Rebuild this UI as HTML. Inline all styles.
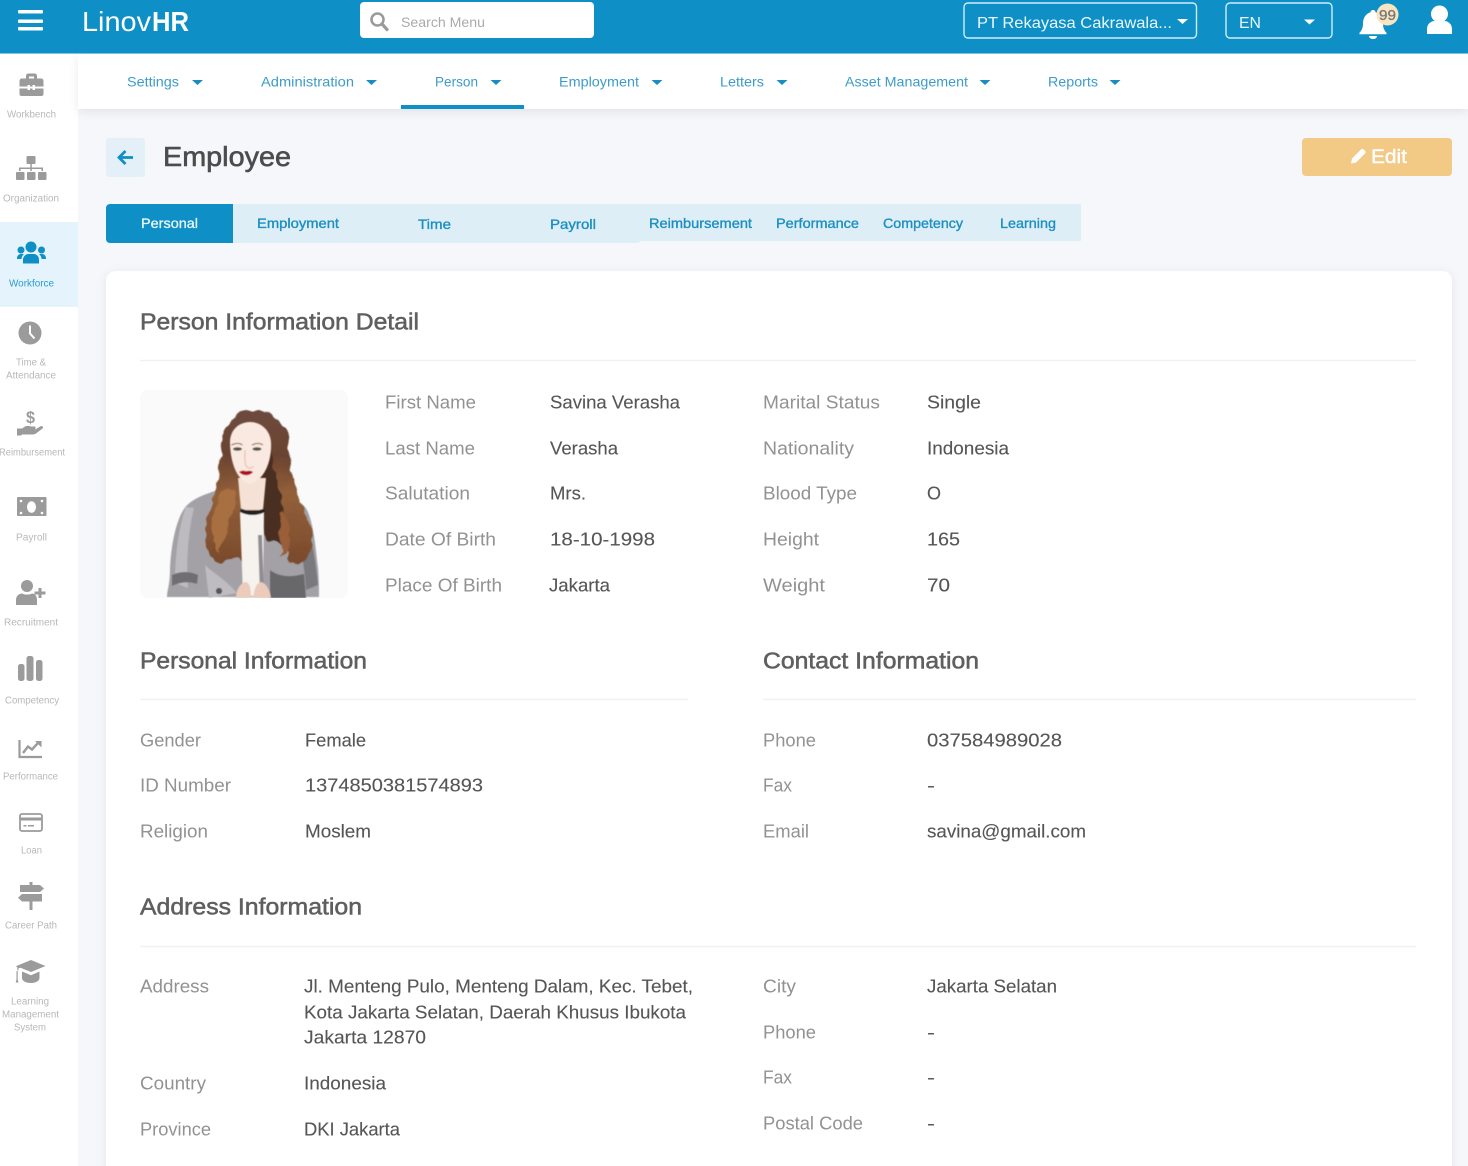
<!DOCTYPE html>
<html lang="en"><head><meta charset="utf-8"><title>Employee - LinovHR</title>
<style>
html,body{margin:0;padding:0;width:1468px;height:1166px;overflow:hidden;background:#f5f7fb}
svg{display:block}
text{font-family:"Liberation Sans",sans-serif}
.l{font-size:18.5px;fill:#929292}
.v{font-size:18.5px;fill:#565656;stroke:#565656;stroke-width:.12px}
.h{font-size:23.5px;fill:#5f5f5f;stroke:#5f5f5f;stroke-width:.55px}
.s{font-size:10px;fill:#b8b8b8}
.n{font-size:14px;fill:#3d9cc8}
.t{font-size:14px;fill:#1c8fc2;stroke:#1c8fc2;stroke-width:.35px}
.i{fill:#9b9b9b}
</style></head><body>
<svg width="1468" height="1166" viewBox="0 0 1468 1166" xmlns="http://www.w3.org/2000/svg">
<defs>
<filter id="sh" x="-5%" y="-5%" width="110%" height="110%"><feDropShadow dx="0" dy="2" stdDeviation="5" flood-color="#000" flood-opacity=".07"/></filter>
<filter id="shn" x="-2%" y="-40%" width="104%" height="200%"><feDropShadow dx="0" dy="3" stdDeviation="5" flood-color="#000" flood-opacity=".08"/></filter>
<filter id="b"><feGaussianBlur stdDeviation=".6"/></filter>
<filter id="curl" x="-10%" y="-10%" width="120%" height="120%"><feTurbulence type="fractalNoise" baseFrequency=".07" numOctaves="2" seed="4" result="n"/><feDisplacementMap in="SourceGraphic" in2="n" scale="11" xChannelSelector="R" yChannelSelector="G"/><feGaussianBlur stdDeviation=".5"/></filter>
<linearGradient id="hg" x1="0" y1="0" x2="0" y2="1"><stop offset="0" stop-color="#6d4a3e"/><stop offset=".3" stop-color="#6b4330"/><stop offset=".55" stop-color="#93603a"/><stop offset="1" stop-color="#7a4a2c"/></linearGradient>
<clipPath id="pc"><rect x="140" y="390" width="208" height="208" rx="8"/></clipPath>
</defs>

<!-- page -->
<rect width="1468" height="1166" fill="#f5f7fb"/>
<!-- sidebar -->
<rect x="0" y="54" width="78" height="1112" fill="#fff"/>
<rect x="0" y="222" width="78" height="85" fill="#e5f4fc"/>
<!-- nav bar -->
<rect x="78" y="54" width="1390" height="55" fill="#fff" filter="url(#shn)"/>
<rect x="401" y="105" width="123" height="4" fill="#0e8fc6"/>
<g class="n" transform="translate(0,-.5)">
<text x="127" y="87" textLength="52" lengthAdjust="spacingAndGlyphs">Settings</text>
<text x="261" y="87" textLength="93" lengthAdjust="spacingAndGlyphs">Administration</text>
<text x="435" y="87" textLength="43" lengthAdjust="spacingAndGlyphs">Person</text>
<text x="559" y="87" textLength="80" lengthAdjust="spacingAndGlyphs">Employment</text>
<text x="720" y="87" textLength="44" lengthAdjust="spacingAndGlyphs">Letters</text>
<text x="845" y="87" textLength="123" lengthAdjust="spacingAndGlyphs">Asset Management</text>
<text x="1048" y="87" textLength="50" lengthAdjust="spacingAndGlyphs">Reports</text>
</g>
<g fill="#1a8cc0">
<path d="M192 80h11l-5.500 5z"/><path d="M366 80h11l-5.500 5z"/><path d="M490.500 80h11l-5.500 5z"/><path d="M651.500 80h11l-5.500 5z"/><path d="M776.500 80h11l-5.500 5z"/><path d="M979.500 80h11l-5.500 5z"/><path d="M1109.500 80h11l-5.500 5z"/>
</g>

<!-- header -->
<rect width="1468" height="53.500" fill="#0e8fc6"/>
<g fill="#fff">
<rect x="18" y="10" width="25" height="3.500" rx="1"/><rect x="18" y="19.500" width="25" height="3.500" rx="1"/><rect x="18" y="27" width="25" height="3.500" rx="1"/>
</g>
<text x="82" y="31" font-size="28" fill="#fff" textLength="69" lengthAdjust="spacingAndGlyphs">Linov</text>
<text x="152" y="31" font-size="28" fill="#fff" font-weight="bold" textLength="37" lengthAdjust="spacingAndGlyphs">HR</text>
<rect x="360" y="2" width="234" height="36" rx="4" fill="#fff"/>
<circle cx="377.500" cy="19.500" r="6" fill="none" stroke="#9a9a9a" stroke-width="2.600"/>
<path d="M382 24l5 5.500" stroke="#9a9a9a" stroke-width="3.200" stroke-linecap="round"/>
<text x="401" y="27" font-size="14" fill="#aaa" textLength="84" lengthAdjust="spacingAndGlyphs">Search Menu</text>
<rect x="964" y="3" width="232.500" height="35" rx="4" fill="none" stroke="#cfeefa" stroke-width="1.400"/>
<text x="977" y="28" font-size="16" fill="#eaf7fc" textLength="195" lengthAdjust="spacingAndGlyphs">PT Rekayasa Cakrawala...</text>
<path d="M1177 19h11l-5.500 5z" fill="#fff"/>
<rect x="1226" y="3" width="106" height="35" rx="4" fill="none" stroke="#cfeefa" stroke-width="1.400"/>
<text x="1239" y="28" font-size="16" fill="#eaf7fc" textLength="22" lengthAdjust="spacingAndGlyphs">EN</text>
<path d="M1304 19.500h11l-5.500 5z" fill="#fff"/>
<path d="M1373 10c1.500 0 2.500 1 2.500 2.300 5 1.500 7.500 6 7.500 11 0 5 1.500 7.500 3.500 9.500v1.500h-27v-1.500c2-2 3.500-4.500 3.500-9.500 0-5 2.500-9.500 7.500-11 0-1.300 1-2.300 2.500-2.300z" fill="#fff"/>
<path d="M1369 36h8c0 2-2 3-4 3s-4-1-4-3z" fill="#fff"/>
<circle cx="1387.500" cy="14.500" r="11" fill="#f7e4c0"/>
<text x="1379" y="20" font-size="15" fill="#777" textLength="17" lengthAdjust="spacingAndGlyphs" stroke="#777" stroke-width=".3">99</text>
<circle cx="1439.500" cy="14" r="8.500" fill="#fff"/>
<path d="M1427 34v-5c0-5 4-8 7.500-8 3 1.500 7 1.500 10 0 3.500 0 7.500 3 7.500 8v5z" fill="#fff"/>

<!-- sidebar icons -->
<g class="i">
<path d="M26 79v-3c0-1.500 1-2.500 2.500-2.500h6c1.500 0 2.500 1 2.500 2.500v3h-3v-2.500h-5V79z"/>
<path d="M22 78.500h19c1.500 0 2.500 1 2.500 2.500v5.500H35v-1.500h-2.500v1.500H30v-1.500h-2.500v1.500H19.500V81c0-1.500 1-2.500 2.500-2.500z"/>
<path d="M19.500 88.500h8V90H30v-1.500h2.500V90H35v-1.500h8.500V94c0 1.200-1 2-2 2H21.500c-1 0-2-.8-2-2z"/>
<rect x="26.500" y="156" width="9" height="8" rx="1"/>
<rect x="16" y="172" width="8.500" height="8" rx="1"/><rect x="27" y="172" width="8.500" height="8" rx="1"/><rect x="38" y="172" width="8.500" height="8" rx="1"/>
<path d="M30.300 164h1.500v3.500H43v3.500h-1.600v-2H31.800v2h-1.500v-2H20.600v2H19V167.500h11.300z"/>
<circle cx="30" cy="333" r="11.500"/>
<path d="M30 325.500v8l4.500 5" fill="none" stroke="#fff" stroke-width="2"/>
<path d="M17 428.500h5l3-2c2-.9 4-.9 6 0h3.500c1.500 0 1.500 2.500 0 2.800h-5.500 6.500l5-3c2-.9 3.500 1 2 2.200l-6.500 5c-1 .6-2 1-3 1H22l-1 1h-4z"/>
<text x="26" y="423" font-size="17" font-weight="bold" fill="#9b9b9b" textLength="9" lengthAdjust="spacingAndGlyphs">$</text>
<rect x="17" y="497" width="29.500" height="19" rx="1"/>
<ellipse cx="31.500" cy="507" rx="4.500" ry="5.800" fill="#fff"/>
<g fill="#fff"><circle cx="21" cy="501" r="1.300"/><circle cx="42" cy="501" r="1.300"/><circle cx="21" cy="513" r="1.300"/><circle cx="42" cy="513" r="1.300"/></g>
<circle cx="27" cy="586" r="6"/>
<path d="M16 605v-5c0-4 3-6.500 6-6.500 3 1.500 7 1.500 10 0 3 0 5 2.500 5 6.500v5z"/>
<path d="M38.500 588h3v3.500h4v3h-4v3.500h-3v-3.500h-4v-3h4z"/>
<rect x="18" y="664" width="6.500" height="17" rx="2.500"/><rect x="26.500" y="656" width="7" height="25" rx="2.500"/><rect x="36" y="660" width="6.500" height="21" rx="2.500"/>
<path d="M19.500 740v17H42" fill="none" stroke="#9b9b9b" stroke-width="2.200"/>
<path d="M23 753l5-6.500 4 3 6-6.500" fill="none" stroke="#9b9b9b" stroke-width="2.400"/>
<path d="M35 741h6.500v6.500z"/>
<rect x="20" y="814" width="22" height="17" rx="2" fill="none" stroke="#9b9b9b" stroke-width="1.800"/>
<rect x="20" y="817.500" width="22" height="3" />
<rect x="23.500" y="825" width="3" height="1.500"/><rect x="28" y="825" width="6" height="1.500"/>
<rect x="29.500" y="882" width="3" height="4"/><rect x="29.500" y="900" width="3" height="10"/>
<path d="M20 885h20l4 3.500-4 3.500H20z"/><path d="M22 894h20v7.500H22l-4-3.700z"/>
<path d="M31 960l14.500 6-14.500 6-10.500-4.300-2 .5v2l-1.200 0v-3l-1.500-1z"/>
<path d="M22 971.500l9 3.700 8.500-3.700v6.500c0 3-4 5-8.500 5-5 0-9-2-9-5z"/>
<path d="M16.500 971v8.500l-.8 3h2.800l-.8-3V971z"/>
</g>
<g fill="#0e8fc6">
<circle cx="31" cy="247" r="5.500"/><circle cx="21" cy="250" r="3.500"/><circle cx="41.500" cy="250" r="3.500"/>
<path d="M23 263.500v-4c0-3 3-5.500 5-5.500h6c2.500 0 5 2.500 5 5.500v4z"/>
<path d="M17 258.500c0-2.500 1.500-4.500 4-4.500h3c-1.500 1.200-2.500 3-2.500 5h-4.500z"/>
<path d="M46 258.500c0-2.500-1.500-4.500-4-4.500h-3c1.500 1.200 2.500 3 2.500 5h4.500z"/>
</g>
<g class="s" transform="translate(0,-.6)">
<text x="7" y="118" textLength="49" lengthAdjust="spacingAndGlyphs">Workbench</text>
<text x="3" y="202" textLength="56" lengthAdjust="spacingAndGlyphs">Organization</text>
<text x="9" y="287" textLength="45" lengthAdjust="spacingAndGlyphs" style="fill:#2a9bcf">Workforce</text>
<text x="16" y="366" textLength="30" lengthAdjust="spacingAndGlyphs">Time &amp;</text>
<text x="6" y="379" textLength="50" lengthAdjust="spacingAndGlyphs">Attendance</text>
<text x="-1" y="456" textLength="66" lengthAdjust="spacingAndGlyphs">Reimbursement</text>
<text x="16" y="541" textLength="31" lengthAdjust="spacingAndGlyphs">Payroll</text>
<text x="4" y="626" textLength="54" lengthAdjust="spacingAndGlyphs">Recruitment</text>
<text x="5" y="704" textLength="54" lengthAdjust="spacingAndGlyphs">Competency</text>
<text x="3" y="780" textLength="55" lengthAdjust="spacingAndGlyphs">Performance</text>
<text x="21" y="854" textLength="21" lengthAdjust="spacingAndGlyphs">Loan</text>
<text x="5" y="929" textLength="52" lengthAdjust="spacingAndGlyphs">Career Path</text>
<text x="11" y="1005" textLength="38" lengthAdjust="spacingAndGlyphs">Learning</text>
<text x="2" y="1018" textLength="57" lengthAdjust="spacingAndGlyphs">Management</text>
<text x="14" y="1031" textLength="32" lengthAdjust="spacingAndGlyphs">System</text>
</g>

<!-- title row -->
<rect x="106" y="138" width="39" height="39" rx="3" fill="#e3f0f7"/>
<path d="M133 157.500h-13M125.500 151l-6.500 6.500 6.500 6.500" fill="none" stroke="#0e8fc6" stroke-width="2.800"/>
<text x="163" y="166" font-size="28" fill="#4c4c4c" stroke="#4c4c4c" stroke-width=".6" textLength="128" lengthAdjust="spacingAndGlyphs">Employee</text>
<rect x="1302" y="138" width="150" height="38" rx="4" fill="#f3c986"/>
<path d="M1351 163.500l1-5 9-9c.8-.8 2-.8 2.700 0l1.300 1.300c.8.700.8 1.900 0 2.700l-9 9z" fill="#fff"/>
<text x="1371" y="163" font-size="19" fill="#fff" stroke="#fff" stroke-width=".4" textLength="36" lengthAdjust="spacingAndGlyphs">Edit</text>

<!-- tabs -->
<rect x="106" y="204" width="535" height="39" rx="4" fill="#deeef7"/>
<rect x="600" y="204" width="481" height="37" rx="1" fill="#deeef7"/>
<path d="M233 204H110a4 4 0 0 0-4 4v31a4 4 0 0 0 4 4h123z" fill="#0e8fc6"/>
<text x="141" y="228" font-size="14" fill="#eaf7fc" stroke="#eaf7fc" stroke-width=".3" textLength="57" lengthAdjust="spacingAndGlyphs">Personal</text>
<g class="t">
<text x="257" y="228" textLength="82" lengthAdjust="spacingAndGlyphs">Employment</text>
<text x="418" y="229" textLength="33" lengthAdjust="spacingAndGlyphs">Time</text>
<text x="550" y="229" textLength="46" lengthAdjust="spacingAndGlyphs">Payroll</text>
<text x="649" y="228" textLength="103" lengthAdjust="spacingAndGlyphs">Reimbursement</text>
<text x="776" y="228" textLength="83" lengthAdjust="spacingAndGlyphs">Performance</text>
<text x="883" y="228" textLength="80" lengthAdjust="spacingAndGlyphs">Competency</text>
<text x="1000" y="228" textLength="56" lengthAdjust="spacingAndGlyphs">Learning</text>
</g>

<!-- card -->
<rect x="106" y="271" width="1346" height="920" rx="10" fill="#fff" filter="url(#sh)"/>
<g stroke="#f1f1f1" stroke-width="1.500">
<path d="M140 360.500H1416M140 699.500H688M763 699.500H1416M140 946.500H1416"/>
</g>
<g class="h" transform="translate(0,-.6)">
<text x="140" y="330" textLength="279" lengthAdjust="spacingAndGlyphs">Person Information Detail</text>
<text x="140" y="669" textLength="227" lengthAdjust="spacingAndGlyphs">Personal Information</text>
<text x="763" y="669" textLength="216" lengthAdjust="spacingAndGlyphs">Contact Information</text>
<text x="140" y="915" textLength="222" lengthAdjust="spacingAndGlyphs">Address Information</text>
</g>

<!-- photo -->
<g clip-path="url(#pc)">
<rect x="140" y="390" width="208" height="208" fill="#fbfafa"/>
<g filter="url(#b)">
<!-- jacket -->
<path d="M167 597c0-7 3-12 3-28 1-24 6-48 14-60 6-9 18-14 34-19l60 4c12 3 24 7 29 16 7 14 9 42 11 58 1 12 1 22 1 29z" fill="#a3a1a6"/>
<path d="M186 507c-7 18-11 48-11 76l13 5c-2-26 0-56 6-80z" fill="#bdbbbf"/>
<path d="M172 575c8-4 18-4 26 0l-1 9c-9-3-17-2-25 2z" fill="#6f6e73"/>
<path d="M297 530c4 18 8 40 9 60l12-5c-2-20-5-42-11-60z" fill="#7a797d"/>
<path d="M270 570c8 6 18 8 34 4l2 24h-36z" fill="#68676b"/>
<path d="M205 565c8 8 20 14 32 28l-28 5z" fill="#bebcc0"/>
</g>
<!-- hair -->
<g filter="url(#curl)">
<path d="M250 410c-17 0-27 13-28 33-1 18-2 34-7 48-4 12-9 22-10 34-2 14 1 28 10 36 7 4 13 2 19-3l10 3 8-30h30l6 28c8 5 14 3 19-3 6-11 7-25 2-37-5-11-12-21-15-35-3-13-4-28-5-42-2-22-14-32-39-32z" fill="url(#hg)"/>
<path d="M272 450c3 25 3 38 9 52 4 12 5 30 1 44l-14-6-12-50z" fill="#4a2d20"/>
<path d="M222 490c-5 16-13 30-10 46 2 8 6 14 10 16 2-20 12-40 14-60z" fill="#a86f3f"/>
<path d="M282 510c6 12 10 24 6 38l-8 8c2-16 2-30-2-44z" fill="#9a5f38"/>
</g>
<g filter="url(#b)">
<!-- neck, shirt -->
<path d="M238 478l3 32h22l3-32z" fill="#f5e1d6"/>
<path d="M240 512c8 3 16 3 24 0l-1 84h-20z" fill="#f6f3ee"/>
<path d="M240 512c8 4 17 4 25 0l-1-3.500c-7 3-16 3-23 0z" fill="#222"/>
<path d="M258 535l2 60 4 0-2-60z" fill="#8f8d92"/>
<!-- face -->
<path d="M230 442c0-12 9-20 20-20s20 8 21 20c1 18-6 38-21 42-14-3-20-24-20-42z" fill="#f9e9e0"/>
<path d="M245 450c0 8-1 14 2 17 2 2 6 1 6-1" fill="none" stroke="#e6b9a6" stroke-width="1"/>
<ellipse cx="237.500" cy="449" rx="4.500" ry="1.800" fill="#55554c"/>
<ellipse cx="257" cy="449" rx="4.500" ry="1.800" fill="#55554c"/>
<path d="M231.500 445c4-2 8-2 11 0M252 445c4-2 8-2 11 0" stroke="#7a5a48" stroke-width="1" fill="none"/>
<path d="M239 472c3-2 5-1.500 7-.8 3-.7 5-.7 7 .8-3 4-10 4.500-14 0z" fill="#b01020"/>
<!-- hands -->
<path d="M236 598c0-8 4-15 10-16 4 1 5 8 5 16z" fill="#eccbbb"/>
<path d="M253 598c1-8 3-15 8-16 5 1 9 8 10 16z" fill="#eccbbb"/>
<circle cx="219" cy="591" r="3" fill="#55545a"/>
</g>
</g>

<!-- labels / values -->
<g class="l" transform="translate(0,-.5)">
<text x="385" y="409" textLength="91" lengthAdjust="spacingAndGlyphs">First Name</text>
<text x="385" y="455" textLength="90" lengthAdjust="spacingAndGlyphs">Last Name</text>
<text x="385" y="500" textLength="85" lengthAdjust="spacingAndGlyphs">Salutation</text>
<text x="385" y="546" textLength="111" lengthAdjust="spacingAndGlyphs">Date Of Birth</text>
<text x="385" y="592" textLength="117" lengthAdjust="spacingAndGlyphs">Place Of Birth</text>
<text x="763" y="409" textLength="117" lengthAdjust="spacingAndGlyphs">Marital Status</text>
<text x="763" y="455" textLength="91" lengthAdjust="spacingAndGlyphs">Nationality</text>
<text x="763" y="500" textLength="94" lengthAdjust="spacingAndGlyphs">Blood Type</text>
<text x="763" y="546" textLength="56" lengthAdjust="spacingAndGlyphs">Height</text>
<text x="763" y="592" textLength="62" lengthAdjust="spacingAndGlyphs">Weight</text>
<text x="140" y="747" textLength="61" lengthAdjust="spacingAndGlyphs">Gender</text>
<text x="140" y="792" textLength="91" lengthAdjust="spacingAndGlyphs">ID Number</text>
<text x="140" y="838" textLength="68" lengthAdjust="spacingAndGlyphs">Religion</text>
<text x="763" y="747" textLength="53" lengthAdjust="spacingAndGlyphs">Phone</text>
<text x="763" y="792" textLength="29" lengthAdjust="spacingAndGlyphs">Fax</text>
<text x="763" y="838" textLength="46" lengthAdjust="spacingAndGlyphs">Email</text>
<text x="140" y="993" textLength="69" lengthAdjust="spacingAndGlyphs">Address</text>
<text x="140" y="1090" textLength="66" lengthAdjust="spacingAndGlyphs">Country</text>
<text x="140" y="1136" textLength="71" lengthAdjust="spacingAndGlyphs">Province</text>
<text x="763" y="993" textLength="33" lengthAdjust="spacingAndGlyphs">City</text>
<text x="763" y="1039" textLength="53" lengthAdjust="spacingAndGlyphs">Phone</text>
<text x="763" y="1084" textLength="29" lengthAdjust="spacingAndGlyphs">Fax</text>
<text x="763" y="1130" textLength="100" lengthAdjust="spacingAndGlyphs">Postal Code</text>
</g>
<g class="v" transform="translate(0,-.5)">
<text x="550" y="409" textLength="130" lengthAdjust="spacingAndGlyphs">Savina Verasha</text>
<text x="550" y="455" textLength="68" lengthAdjust="spacingAndGlyphs">Verasha</text>
<text x="550" y="500" textLength="36" lengthAdjust="spacingAndGlyphs">Mrs.</text>
<text x="550" y="546" textLength="105" lengthAdjust="spacingAndGlyphs">18-10-1998</text>
<text x="549" y="592" textLength="61" lengthAdjust="spacingAndGlyphs">Jakarta</text>
<text x="927" y="409" textLength="54" lengthAdjust="spacingAndGlyphs">Single</text>
<text x="927" y="455" textLength="82" lengthAdjust="spacingAndGlyphs">Indonesia</text>
<text x="927" y="500" textLength="14" lengthAdjust="spacingAndGlyphs">O</text>
<text x="927" y="546" textLength="33" lengthAdjust="spacingAndGlyphs">165</text>
<text x="927" y="592" textLength="23" lengthAdjust="spacingAndGlyphs">70</text>
<text x="305" y="747" textLength="61" lengthAdjust="spacingAndGlyphs">Female</text>
<text x="305" y="792" textLength="178" lengthAdjust="spacingAndGlyphs">1374850381574893</text>
<text x="305" y="838" textLength="66" lengthAdjust="spacingAndGlyphs">Moslem</text>
<text x="927" y="747" textLength="135" lengthAdjust="spacingAndGlyphs">037584989028</text>
<text x="927" y="792" textLength="8" lengthAdjust="spacingAndGlyphs">-</text>
<text x="927" y="838" textLength="159" lengthAdjust="spacingAndGlyphs">savina@gmail.com</text>
<text x="304" y="993" textLength="389" lengthAdjust="spacingAndGlyphs">Jl. Menteng Pulo, Menteng Dalam, Kec. Tebet,</text>
<text x="304" y="1019" textLength="382" lengthAdjust="spacingAndGlyphs">Kota Jakarta Selatan, Daerah Khusus Ibukota</text>
<text x="304" y="1044" textLength="122" lengthAdjust="spacingAndGlyphs">Jakarta 12870</text>
<text x="304" y="1090" textLength="82" lengthAdjust="spacingAndGlyphs">Indonesia</text>
<text x="304" y="1136" textLength="96" lengthAdjust="spacingAndGlyphs">DKI Jakarta</text>
<text x="927" y="993" textLength="130" lengthAdjust="spacingAndGlyphs">Jakarta Selatan</text>
<text x="927" y="1039" textLength="8" lengthAdjust="spacingAndGlyphs">-</text>
<text x="927" y="1084" textLength="8" lengthAdjust="spacingAndGlyphs">-</text>
<text x="927" y="1130" textLength="8" lengthAdjust="spacingAndGlyphs">-</text>
</g>
</svg>
</body></html>
